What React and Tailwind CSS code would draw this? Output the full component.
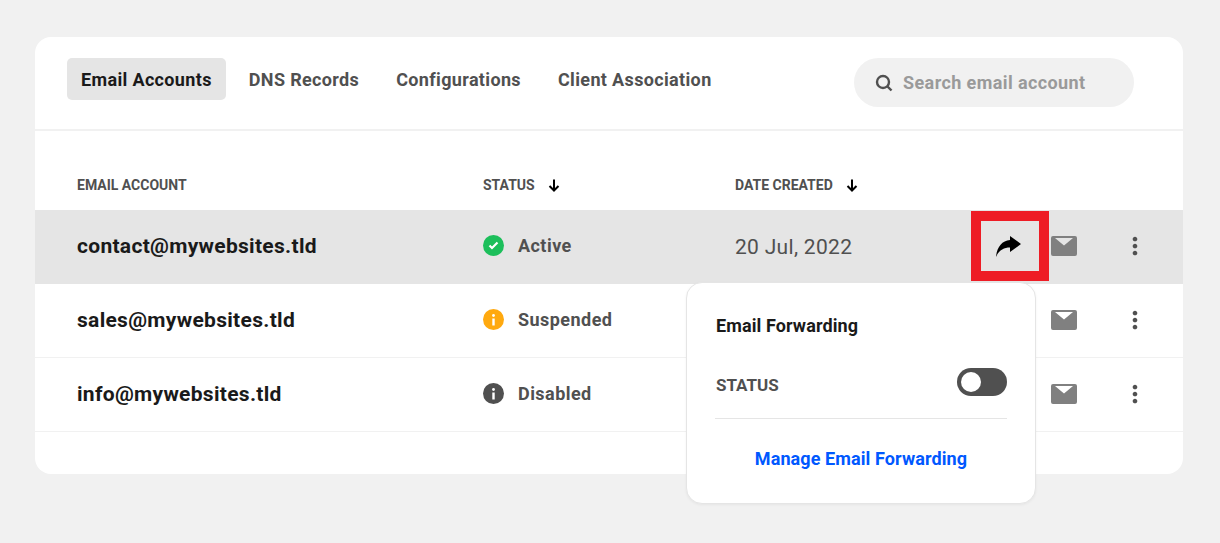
import React from "react";
import { MdMoreVert } from "react-icons/md";

const tabs = ["Email Accounts", "DNS Records", "Configurations", "Client Association"];

const rows = [
  { email: "contact@mywebsites.tld", status: "Active", date: "20 Jul, 2022", tone: "active" },
  { email: "sales@mywebsites.tld", status: "Suspended", date: "", tone: "suspended" },
  { email: "info@mywebsites.tld", status: "Disabled", date: "", tone: "disabled" },
];

const StatusIcon = ({ tone }) => {
  const fill = tone === "active" ? "#1dbf5b" : tone === "suspended" ? "#ffa90f" : "#505050";
  return (
    <svg width="21" height="21" viewBox="0 0 21 21">
      <circle cx="10.5" cy="10.5" r="10.5" fill={fill} />
      {tone === "active" ? (
        <path d="M6.5 10.5L9 13L14.5 7.5" fill="none" stroke="#fff" strokeWidth="2.2" />
      ) : (
        <>
          <circle cx="10.5" cy="6.5" r="1.4" fill="#fff" />
          <rect x="9.3" y="9.5" width="2.4" height="7" fill="#fff" />
        </>
      )}
    </svg>
  );
};

const SortArrow = () => (
  <svg width="12" height="13" viewBox="0 0 12 13" fill="none" stroke="#000" strokeWidth="2" className="ml-[13px]">
    <path d="M6 0.5V11.5M1.5 7L6 11.5L10.5 7" />
  </svg>
);

const ForwardIcon = () => (
  <svg width="25" height="21" viewBox="0 0 25 21" fill="#000">
    <path d="M14 0L25 8L14 16V11.5C8 11.5 3 14 0 21C1 11 6 4.5 14 4Z" />
  </svg>
);

const MailIcon = () => (
  <svg width="26" height="20" viewBox="0 0 26 20" fill="#808080">
    <path
      fillRule="evenodd"
      d="M2 0H24A2 2 0 0 1 26 2V18A2 2 0 0 1 24 20H2A2 2 0 0 1 0 18V2A2 2 0 0 1 2 0ZM4 2L13 9.5L22 2Z"
    />
  </svg>
);

const Row = ({ row, first }) => (
  <div
    className={`grid h-[74px] grid-cols-[406px_252px_236px_80px_71px_40px] items-center border-b pl-[42px] ${
      first ? "border-[#e5e5e5] bg-[#e5e5e5]" : "border-[#f1f1f1]"
    }`}
  >
    <div className="text-[21px] font-bold tracking-[0.3px] text-[#1a1a1a]">{row.email}</div>
    <div className="-mt-[3px] flex items-center gap-[14px] text-[18px] font-bold tracking-[0.45px] text-[#505050]">
      <StatusIcon tone={row.tone} />
      {row.status}
    </div>
    <div className="mt-[2px] text-[21px] tracking-[0.3px] text-[#505050]">{row.date}</div>
    <div className="-ml-[6px] flex items-center justify-center">{first && <ForwardIcon />}</div>
    <div className="-mt-[2px] flex items-center">
      <MailIcon />
    </div>
    <div className="-mt-px -ml-px flex items-center">
      <MdMoreVert className="text-[28px] text-[#505050]" />
    </div>
  </div>
);

export default function App() {
  return (
    <div className="min-h-[543px] bg-[#f1f1f1] pl-[35px] pr-[37px] pt-[37px] font-['Roboto',sans-serif]">
      <div className="relative h-[437px] rounded-[16px] bg-white">
        {/* Tabs and search */}
        <div className="flex h-[94px] items-start justify-between border-b-2 border-[#f1f1f1] pl-[32px] pr-[49px] pt-[21px]">
          <div className="flex gap-[9px]">
            {tabs.map((tab, i) => (
              <div
                key={tab}
                className={`flex h-[42px] items-center rounded-[5px] px-[14px] text-[18px] font-bold tracking-[0.35px] ${
                  i === 0 ? "bg-[#e5e5e5] text-[#1a1a1a]" : "text-[#505050]"
                }`}
              >
                {tab}
              </div>
            ))}
          </div>
          <div className="flex h-[49px] w-[280px] items-center rounded-full bg-[#f1f1f1] pl-[21px]">
            <svg width="18" height="18" viewBox="0 0 18 18" fill="none" stroke="#505050" strokeWidth="2.4">
              <circle cx="8" cy="8" r="6" />
              <path d="M12.5 12.5L16.5 16.5" />
            </svg>
            <span className="ml-[10px] text-[18px] font-bold tracking-[0.4px] text-[#9a9a9a]">
              Search email account
            </span>
          </div>
        </div>

        {/* Table header */}
        <div className="grid h-[79px] grid-cols-[406px_252px_1fr] items-center pl-[42px] pt-[30px] text-[14px] font-bold text-[#505050]">
          <div>EMAIL ACCOUNT</div>
          <div className="flex items-center">
            STATUS
            <SortArrow />
          </div>
          <div className="flex items-center">
            DATE CREATED
            <SortArrow />
          </div>
        </div>

        {rows.map((row, i) => (
          <Row key={row.email} row={row} first={i === 0} />
        ))}

        {/* Highlight around the forward action */}
        <div className="absolute left-[936px] top-[174px] h-[70px] w-[78px] border-[10px] border-[#ee1c25]" />

        {/* Forwarding popover */}
        <div className="absolute left-[651px] top-[245px] h-[222px] w-[350px] rounded-[16px] border border-[#e5e5e5] bg-white px-[28px] shadow-[0_1px_3px_rgba(0,0,0,0.05)]">
          <div className="pl-px pt-[31px] text-[18px] font-bold leading-[24px] tracking-[0.1px] text-[#1a1a1a]">
            Email Forwarding
          </div>
          <div className="mt-[27px] flex items-center justify-between">
            <span className="mt-[8px] pl-px text-[17px] font-bold text-[#505050]">STATUS</span>
            <div className="flex h-[28px] w-[50px] items-center rounded-full bg-[#505050] pl-[4px]">
              <div className="h-[20px] w-[20px] rounded-full bg-white" />
            </div>
          </div>
          <div className="mt-[19px] border-t border-[#e5e5e5]" />
          <div className="mt-[28px] text-center text-[18px] font-bold leading-[24px] tracking-[0.1px] text-[#0058ff]">
            Manage Email Forwarding
          </div>
        </div>
      </div>
    </div>
  );
}
